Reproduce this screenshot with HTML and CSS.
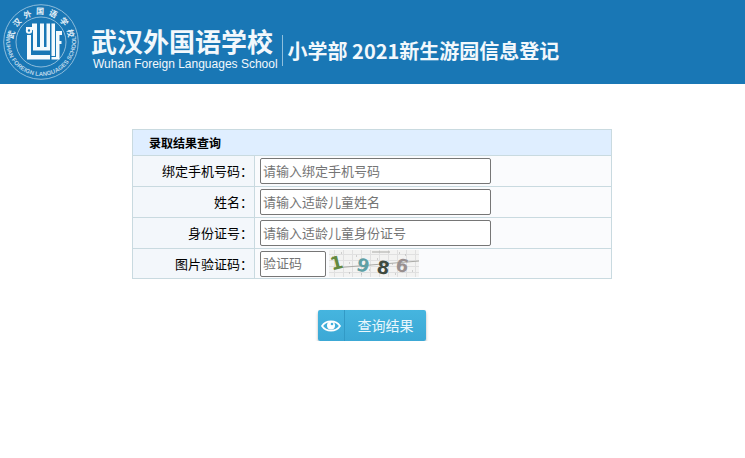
FILE: index.html
```html
<!DOCTYPE html>
<html lang="zh-CN">
<head>
<meta charset="utf-8">
<title>小学部 2021新生游园信息登记</title>
<link rel="stylesheet" href="styles.css">
</head>
<body>
<header class="banner">
  <svg class="crest" viewBox="0 0 78 78" aria-hidden="true">
    <defs>
      <path id="arc-top" d="M14.300 51.500A27.700 27.700 0 1 1 63.700 51.500"/>
      <path id="arc-bottom" d="M4.300 33.400A35 35 0 1 0 73.700 33.400"/>
    </defs>
    <circle cx="39" cy="39" r="37.300" class="ring"/>
    <circle cx="39" cy="39" r="25" class="ring"/>
    <text class="crest-cn"><textPath href="#arc-top" startOffset="51%" text-anchor="middle">武汉外国语学校</textPath></text>
    <text class="crest-en"><textPath href="#arc-bottom" startOffset="50%" text-anchor="middle">WUHAN FOREIGN LANGUAGES SCHOOL</textPath></text>
    <g class="mark">
      <path d="M31 20.500H35V44H38V20.500H42V44H44.500V20.500H48V47.500H31Z"/>
      <path d="M25 32H29V52H48V56.500H25Z"/>
      <path d="M49.500 20.500H53V53H49.500ZM54 28H60V32H57.500V38H59.500V41H57.500V56.500H49.500V54H54Z"/>
      <path d="M24 24H30V20.500H31V27H24Z"/>
    </g>
    <circle cx="27" cy="27.500" r="2.200" class="mark-dot"/>
  </svg>
  <div class="school">
    <div class="school-cn">武汉外国语学校</div>
    <div class="school-en">Wuhan Foreign Languages School</div>
  </div>
  <h1 class="headline">小学部 2021新生游园信息登记</h1>
</header>
<main>
  <form class="query">
    <table class="form-table">
      <thead>
        <tr><th colspan="2">录取结果查询</th></tr>
      </thead>
      <tbody>
        <tr><td class="label"><label for="phone">绑定手机号码：</label></td><td><input id="phone" type="text" placeholder="请输入绑定手机号码"></td></tr>
        <tr><td class="label"><label for="name">姓名：</label></td><td><input id="name" type="text" placeholder="请输入适龄儿童姓名"></td></tr>
        <tr><td class="label"><label for="idno">身份证号：</label></td><td><input id="idno" type="text" placeholder="请输入适龄儿童身份证号"></td></tr>
        <tr class="code-line"><td class="label"><label for="code">图片验证码：</label></td><td><div class="code-row"><input id="code" class="short" type="text" placeholder="验证码">
          <svg class="captcha" viewBox="0 0 90 27" role="img" aria-label="1986">
            <rect width="90" height="27" fill="#f3f3f2"/>
            <path d="M0 4.500H90M0 10.500H90M0 16.500H90M0 22.500H90M5.500 0V27M14.500 0V27M23.500 0V27M32.500 0V27M41.500 0V27M50.500 0V27M59.500 0V27M68.500 0V27M77.500 0V27M86.500 0V27" stroke="#e0e0e0" fill="none"/>
            <path d="M5 18L90 11M43 2H61" stroke="#a9a9a5" fill="none"/>
            <path d="M3 7h1M12 3h1M20 13h1M27 6h1M40 20h1M48 9h1M63 14h1M70 3h1M83 21h1M76 5h1M20 23h1M66 24h1M32 24h1" stroke="#aaa"/>
            <g class="digits">
              <text x="1" y="19" fill="#63893f" transform="rotate(-14 8 12)">1</text>
              <text x="28" y="22" fill="#5fa0a5" transform="rotate(14 35 15)">9</text>
              <text x="48" y="24" fill="#3f4a40" transform="rotate(10 55 17)">8</text>
              <text x="67" y="22" fill="#999090" transform="rotate(12 73 15)">6</text>
            </g>
          </svg></div></td></tr>
      </tbody>
    </table>
    <button class="submit" type="submit">
      <span class="submit-icon">
        <svg viewBox="0 0 20 14" aria-hidden="true">
          <path d="M1 7C5 0.800 15 0.800 19 7C15 13.200 5 13.200 1 7Z" fill="none" stroke="#fff" stroke-width="1.700"/>
          <circle cx="10" cy="6.500" r="4" fill="#fff"/>
          <circle cx="11" cy="5" r="1.300" fill="#41b1dc"/>
        </svg>
      </span>
      <span class="submit-text">查询结果</span>
    </button>
  </form>
</main>
</body>
</html>
```
FILE: styles.css
```css
* { box-sizing: border-box; }
body {
  margin: 0;
  background: #fff;
  color: #000;
  font-family: "Noto Sans CJK SC", sans-serif;
  font-size: 13px;
}
.banner {
  display: flex;
  align-items: center;
  min-height: 84px;
  padding-left: 2px;
  background: #1977b5;
  color: #f2f8fc;
  white-space: nowrap;
}
.crest { width: 78px; height: 78px; flex: none; }
.ring { fill: none; stroke: #8dbcdb; stroke-width: 1; }
.crest-cn { font-size: 8px; font-weight: bold; fill: #e4f0f8; letter-spacing: 4px; }
.crest-en { font-family: "Liberation Sans", sans-serif; font-size: 6px; font-weight: bold; fill: #b9d6ea; }
.mark { fill: #f4fafd; }
.mark-dot { fill: #1977b5; stroke: #f4fafd; stroke-width: 2; }
.school { margin-left: 11px; padding: 15px 4px 0 0; }
.school-cn { font-size: 26px; line-height: 28px; font-weight: bold; }
.school-en { padding-left: 2px; font-family: "Liberation Sans", sans-serif; font-size: 12px; line-height: 18px; }
.headline {
  margin: 16px 0 0;
  padding-left: 5px;
  border-left: 1px solid #8fbfdd;
  font-size: 20px;
  line-height: 31px;
  font-weight: bold;
}
.query {
  display: flex;
  flex-direction: column;
  align-items: center;
  padding: 45px 1px 0 0;
}
.form-table {
  width: 480px;
  max-width: 100%;
  border-collapse: collapse;
  background: #fafbfd;
}
.form-table th, .form-table td { border: 1px solid #c9dae0; }
.form-table th {
  height: 26px;
  padding: 0 16px;
  background: #dfeeff;
  font-size: 12px;
  line-height: 18px;
  text-align: left;
}
.form-table td { height: 31px; padding: 2px 5px; line-height: 18px; }
.form-table .label { width: 122px; padding: 0 1px 0 0; background: #f3f7fb; text-align: right; }
.form-table .code-line td { height: 30px; padding-top: 1px; padding-bottom: 1px; }
input {
  display: block;
  width: 231px;
  height: 26px;
  padding: 0 2px 2px;
  border: 1px solid #767676;
  border-radius: 2px;
  background: #fff;
  font: inherit;
}
input::placeholder { color: #757575; }
.short { width: 66px; }
.code-row { display: flex; align-items: center; gap: 3px; }
.captcha { width: 90px; height: 27px; }
.digits { font-family: "DejaVu Sans", sans-serif; font-size: 18px; font-weight: bold; }
.submit {
  display: flex;
  align-items: stretch;
  width: 108px;
  height: 31px;
  margin-top: 31px;
  padding: 0;
  border: 0;
  border-radius: 2px;
  background: linear-gradient(#45b5df, #3ca8d5);
  box-shadow: 0 2px 3px rgba(0, 0, 0, 0.3);
  color: #eaf7fc;
  font: inherit;
  font-size: 14px;
}
.submit-icon {
  display: flex;
  align-items: center;
  justify-content: center;
  width: 27px;
  border-right: 1px solid #329ac6;
}
.submit-icon svg { width: 20px; height: 14px; }
.submit-text { flex: 1; line-height: 30px; text-align: center; }
```
